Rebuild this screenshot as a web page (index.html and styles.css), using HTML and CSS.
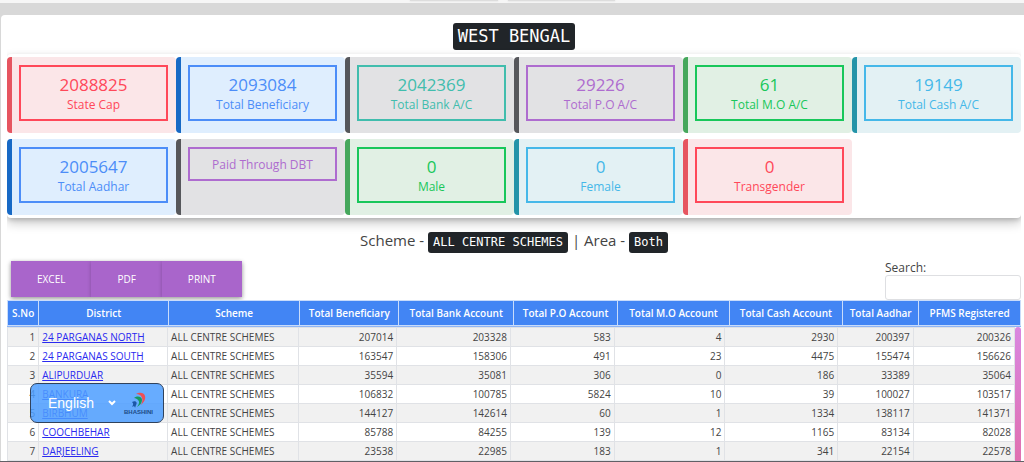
FILE: index.html
```html
<!DOCTYPE html>
<html lang="en">
<head>
<meta charset="utf-8">
<title>West Bengal</title>
<link rel="stylesheet" href="styles.css">
</head>
<body>
<div class="page">
  <div class="strip"><span class="strip-tab"></span><span class="strip-tab strip-tab-wide"></span></div>
  <main class="card">
    <h1 class="title"><code class="tag tag-large">WEST BENGAL</code></h1>
    <section class="summary">
      <div class="tile pink"><div class="box red"><strong>2088825</strong><span>State Cap</span></div></div>
      <div class="tile azure"><div class="box blue"><strong>2093084</strong><span>Total Beneficiary</span></div></div>
      <div class="tile gray"><div class="box teal"><strong>2042369</strong><span>Total Bank A/C</span></div></div>
      <div class="tile gray"><div class="box purple"><strong>29226</strong><span>Total P.O A/C</span></div></div>
      <div class="tile mint"><div class="box green"><strong>61</strong><span>Total M.O A/C</span></div></div>
      <div class="tile aqua"><div class="box sky"><strong>19149</strong><span>Total Cash A/C</span></div></div>
      <div class="tile azure"><div class="box blue"><strong>2005647</strong><span>Total Aadhar</span></div></div>
      <div class="tile gray"><div class="box purple"><span>Paid Through DBT</span></div></div>
      <div class="tile mint"><div class="box green"><strong>0</strong><span>Male</span></div></div>
      <div class="tile aqua"><div class="box sky"><strong>0</strong><span>Female</span></div></div>
      <div class="tile pink"><div class="box red"><strong>0</strong><span>Transgender</span></div></div>
    </section>
    <h2 class="filters">Scheme - <code class="tag">ALL CENTRE SCHEMES</code> | Area - <code class="tag">Both</code></h2>
    <div class="toolbar">
      <div class="exports">
        <button type="button">EXCEL</button><button type="button">PDF</button><button type="button">PRINT</button>
      </div>
      <div class="search">
        <label for="search">Search:</label>
        <input id="search" type="search">
      </div>
    </div>
    <table class="grid grid-head">
      <colgroup><col class="c-no"><col class="c-district"><col class="c-scheme"><col class="c-ben"><col class="c-bank"><col class="c-po"><col class="c-mo"><col class="c-cash"><col class="c-aadhar"><col></colgroup>
      <thead><tr><th>S.No</th><th>District</th><th>Scheme</th><th>Total Beneficiary</th><th>Total Bank Account</th><th>Total P.O Account</th><th>Total M.O Account</th><th>Total Cash Account</th><th>Total Aadhar</th><th>PFMS Registered</th></tr></thead>
    </table>
    <div class="scroll">
      <table class="grid grid-body">
        <colgroup><col class="c-no"><col class="c-district"><col class="c-scheme"><col class="c-ben"><col class="c-bank"><col class="c-po"><col class="c-mo"><col class="c-cash"><col class="c-aadhar"><col></colgroup>
        <tbody>
          <tr><td>1</td><td><a href="#">24 PARGANAS NORTH</a></td><td>ALL CENTRE SCHEMES</td><td>207014</td><td>203328</td><td>583</td><td>4</td><td>2930</td><td>200397</td><td>200326</td></tr>
          <tr><td>2</td><td><a href="#">24 PARGANAS SOUTH</a></td><td>ALL CENTRE SCHEMES</td><td>163547</td><td>158306</td><td>491</td><td>23</td><td>4475</td><td>155474</td><td>156626</td></tr>
          <tr><td>3</td><td><a href="#">ALIPURDUAR</a></td><td>ALL CENTRE SCHEMES</td><td>35594</td><td>35081</td><td>306</td><td>0</td><td>186</td><td>33389</td><td>35064</td></tr>
          <tr><td>4</td><td><a href="#">BANKURA</a></td><td>ALL CENTRE SCHEMES</td><td>106832</td><td>100785</td><td>5824</td><td>10</td><td>39</td><td>100027</td><td>103517</td></tr>
          <tr><td>5</td><td><a href="#">BIRBHUM</a></td><td>ALL CENTRE SCHEMES</td><td>144127</td><td>142614</td><td>60</td><td>1</td><td>1334</td><td>138117</td><td>141371</td></tr>
          <tr><td>6</td><td><a href="#">COOCHBEHAR</a></td><td>ALL CENTRE SCHEMES</td><td>85788</td><td>84255</td><td>139</td><td>12</td><td>1165</td><td>83134</td><td>82028</td></tr>
          <tr><td>7</td><td><a href="#">DARJEELING</a></td><td>ALL CENTRE SCHEMES</td><td>23538</td><td>22985</td><td>183</td><td>1</td><td>341</td><td>22154</td><td>22578</td></tr>
        </tbody>
      </table>
      <div class="thumb"></div>
    </div>
  </main>
  <div class="language">
    <select aria-label="Language"><option>English</option></select>
    <svg class="chevron" viewBox="0 0 8 6" aria-hidden="true"><path d="M1 1l3 3 3-3" fill="none" stroke="#fff" stroke-width="2"/></svg>
    <div class="brand">
      <svg viewBox="0 0 16 17" aria-hidden="true">
        <path d="M6 2c3-2 8-2 9 2 1 4-2 7-4 9 1-3 2-5 1-7-1-3-3-4-6-4z" fill="#ee4f55"/>
        <path d="M4 6c4-3 8-1 8 2 0 3-2 5-5 7 2-3 3-5 1-7-1-1-2-2-4-2z" fill="#159a61"/>
        <path d="M2 10c3-2 6 0 4 3l-1 3c0-2-2-2-3-1 1-2 2-3 0-5z" fill="#1c56a7"/>
      </svg>
      <span>BHASHINI</span>
    </div>
  </div>
</div>
</body>
</html>
```
FILE: styles.css
```css
* { box-sizing: border-box; }
body {
  margin: 0;
  background: #d8d8d8;
  color: #444;
  font-family: "Open Sans", "Noto Sans", sans-serif;
  font-size: 12px;
}
.page {
  position: relative;
  display: flex;
  flex-direction: column;
  height: 100vh;
  overflow: hidden;
  border-bottom: 1px solid #606066;
}
.strip {
  display: flex;
  justify-content: center;
  gap: 10px;
  height: 3px;
  flex: none;
  margin-bottom: 12px;
  background: #f6f6f6;
}
.strip-tab { width: 88px; height: 1px; background: #ddd; box-shadow: 0 0 2px #ccc; }
.strip-tab-wide { width: 107px; }
.card {
  display: flex;
  flex-direction: column;
  flex: 1;
  min-height: 0;
  margin-left: 1px;
  padding: 8px 3px 0 6px;
  background: #fff;
  border-radius: 4px 0 0 0;
}
.title { margin: 0 0 4px; text-align: center; font-size: 17px; line-height: 27px; font-weight: 400; }
.tag {
  display: inline-block;
  padding: 0 5px;
  border-radius: 3px;
  background: #212529;
  color: #fff;
  font-family: "DejaVu Sans Mono", monospace;
  font-size: 12px;
  line-height: 21px;
}
.tag-large { font-size: 17px; line-height: 27px; vertical-align: top; }
.summary {
  display: grid;
  grid-template-columns: repeat(6, 1fr);
  row-gap: 6px;
  padding: 3px 0;
  border-radius: 4px;
  background: #fff;
  box-shadow: 0 5px 11px rgba(0,0,0,.22), 0 2px 4px rgba(0,0,0,.15);
  clip-path: inset(-6px 0 -16px 0);
}
.tile { padding: 8px 8px 12px 7px; border-left: 5px solid; border-radius: 4px; min-height: 76px; }
.pink { background: #fbe6e8; border-color: #e65560; }
.azure { background: #dfeefe; border-color: #1769c5; }
.gray { background: #e2e2e4; border-color: #56575b; }
.mint { background: #e1f0e4; border-color: #46a75c; }
.aqua { background: #e3f1f4; border-color: #2494a8; }
.box { display: flex; flex-direction: column; padding: 7px 0 6px; border: 2px solid; text-align: center; line-height: 17px; }
.box strong { font-size: 17px; line-height: 22px; font-weight: 400; }
.red { color: #ff4859; }
.blue { color: #4c8df8; }
.teal { color: #41bdad; }
.purple { color: #ae6ccf; }
.green { color: #18c75a; }
.sky { color: #45b8e9; }
.filters { margin: 11px 0 8px; text-align: center; font-size: 15px; line-height: 22px; font-weight: 400; }
.toolbar { display: flex; justify-content: space-between; padding-left: 4px; }
.exports { display: flex; height: 36px; box-shadow: 0 2px 5px rgba(0,0,0,.25); }
.exports button {
  padding: 0 26px;
  border: 0;
  background: #a965cb;
  box-shadow: 0 1px 4px rgba(0,0,0,.22);
  color: #fff;
  font: 10px "Open Sans", sans-serif;
}
.search { display: flex; flex-direction: column; width: 136px; line-height: 13px; }
.search input { height: 25px; margin-top: 1px; border: 1px solid #dedfe2; border-radius: 3px; background: #fff; }
.grid { width: 100%; table-layout: fixed; border-collapse: collapse; font-size: 10px; line-height: 14px; }
.c-no { width: 3.1%; }
.c-district { width: 12.8%; }
.c-scheme { width: 12.95%; }
.c-ben { width: 9.8%; }
.c-bank { width: 11.3%; }
.c-po { width: 10.3%; }
.c-mo { width: 11%; }
.c-cash { width: 11.2%; }
.c-aadhar { width: 7.5%; }
.grid th { height: 25px; padding: 0; border: 1px solid #c9dcfb; background: #4285f4; color: #fff; font-weight: 600; white-space: nowrap; }
.scroll { display: flex; align-items: stretch; min-height: 0; flex: 1; overflow: hidden; border-top: 1px solid #8db4f5; }
.grid-body { align-self: flex-start; }
.grid-body td { height: 19px; padding: 2px 3px; border: 1px solid #e0e2e6; text-align: right; white-space: nowrap; }
.grid-body td:nth-child(2), .grid-body td:nth-child(3) { text-align: left; }
.grid-body tr:nth-child(odd) { background: #f1f1f1; }
.grid-body a { color: #2a2af0; }
.thumb { flex: 0 0 6px; border-radius: 3px 3px 0 0; background: linear-gradient(#d987e0, #e070b0); }
.language {
  position: absolute;
  left: 30px;
  bottom: 38px;
  display: flex;
  align-items: center;
  width: 134px;
  height: 40px;
  padding: 0 10px 0 17px;
  border: 1px solid #30425c;
  border-radius: 7px;
  background: rgba(76, 158, 255, .85);
}
.language select { flex: 1; min-width: 0; padding: 0; border: 0; appearance: none; background: none; color: #fff; font: 14px "Liberation Sans", Arial, sans-serif; }
.chevron { width: 8px; height: 6px; margin-right: 8px; }
.brand { display: flex; flex-direction: column; align-items: center; color: #1b4a86; font: 700 6px/6px "Liberation Sans", Arial, sans-serif; }
.brand svg { width: 16px; height: 17px; }
```
